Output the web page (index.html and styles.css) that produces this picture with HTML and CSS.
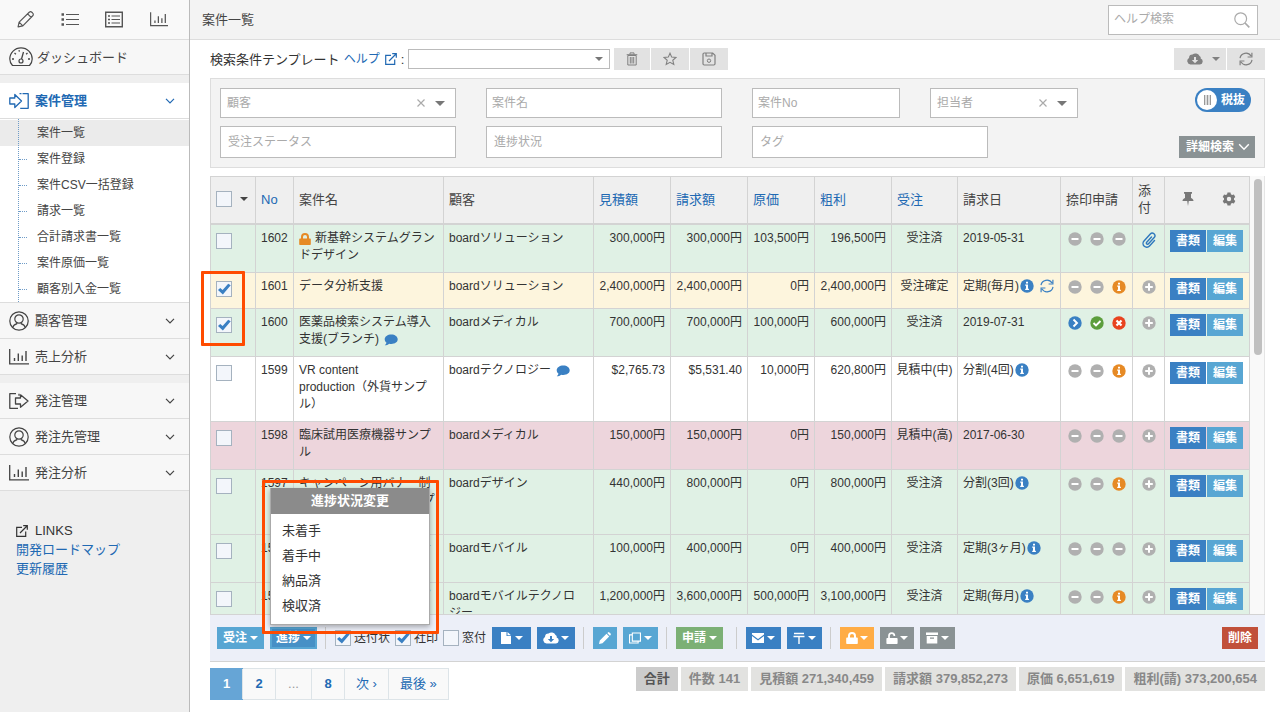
FILE: index.html
```html
<!DOCTYPE html>
<html lang="ja">
<head>
<meta charset="utf-8">
<title>案件一覧</title>
<link rel="stylesheet" href="styles.css">
</head>
<body>
<svg class="defs" aria-hidden="true">
  <symbol id="pencil-o" viewBox="0 0 16 16"><path d="M1 15l1-4.500L11.500 1.200a1.700 1.700 0 0 1 2.500 0l.8.8a1.700 1.700 0 0 1 0 2.500L5.500 14zM2 10.500L5.500 14M10 2.700L13.300 6" fill="none" stroke="currentColor" stroke-width="1.100" stroke-linejoin="round"/></symbol>
  <symbol id="list" viewBox="0 0 18 14"><path d="M5 2h13M5 7h13M5 12h13" stroke="currentColor" stroke-width="1.100"/><path d="M.5.800h2.500v2.500H.5zM.5 5.800h2.500v2.500H.5zM.5 10.800h2.500v2.500H.5z" fill="currentColor"/></symbol>
  <symbol id="listbox" viewBox="0 0 18 16"><path d="M.7.700h16.600v14.600H.7z" fill="none" stroke="currentColor" stroke-width="1.400"/><path d="M6.500 4.500h8.500M6.500 8h8.500M6.500 11.500h8.500" stroke="currentColor" stroke-width="1.200"/><path d="M3 3.700h2v1.600H3zM3 7.200h2v1.600H3zM3 10.700h2v1.600H3z" fill="currentColor"/></symbol>
  <symbol id="chart" viewBox="0 0 20 16"><path d="M.7 0v14.800H20" fill="none" stroke="currentColor" stroke-width="1.300"/><path d="M5.500 12V9M9.300 12V4.500M13.200 12V6.500M17 12V2" stroke="currentColor" stroke-width="1.400"/></symbol>
  <symbol id="gauge" viewBox="0 0 24 20"><path d="M3.500 18.500C1.700 16.500.8 14.500.8 12a11.200 11.200 0 0 1 22.400 0c0 2.500-.9 4.500-2.700 6.500z" fill="none" stroke="currentColor" stroke-width="1.200"/><circle cx="12" cy="14" r="2" fill="none" stroke="currentColor" stroke-width="1.200"/><path d="M12.500 12l2-7M3 12h2M19 12h2M5.500 6l1.400 1.200M18.500 6l-1.400 1.200M10 3.200l.4 1.500" stroke="currentColor" stroke-width="1.300"/></symbol>
  <symbol id="enter" viewBox="0 0 20 16"><path d="M.8 5h5V1.500L12.500 8l-6.700 6.500V11h-5zM10.500.7h2M13.500.7h5.700v14.600h-8" fill="none" stroke="currentColor" stroke-width="1.300" stroke-linejoin="round"/></symbol>
  <symbol id="leave" viewBox="0 0 20 16"><path d="M7 .7H.8v14.600H7M10 .7v2M7 15.300h2M6.500 5h5V1.800L19 8l-7.500 6.200V11h-5z" fill="none" stroke="currentColor" stroke-width="1.300" stroke-linejoin="round"/></symbol>
  <symbol id="user" viewBox="0 0 20 20"><circle cx="10" cy="10" r="9.200" fill="none" stroke="currentColor" stroke-width="1.200"/><circle cx="10" cy="8" r="4.200" fill="none" stroke="currentColor" stroke-width="1.200"/><path d="M3.700 16.500c.5-2.300 2-3.200 4-3.700v-1M16.300 16.500c-.5-2.300-2-3.200-4-3.700v-1" fill="none" stroke="currentColor" stroke-width="1.200"/></symbol>
  <symbol id="chev" viewBox="0 0 10 6"><path d="M1 .8l4 4 4-4" fill="none" stroke="currentColor" stroke-width="1.200"/></symbol>
  <symbol id="caret" viewBox="0 0 8 4"><path d="M0 0h8L4 4z" fill="currentColor"/></symbol>
  <symbol id="ext" viewBox="0 0 12 12"><path d="M6 2.300H.7v9h9V6.500M4 8l7-7M7.200.7h4.100v4.100" fill="none" stroke="currentColor" stroke-width="1.200"/></symbol>
  <symbol id="search" viewBox="0 0 16 16"><circle cx="6.700" cy="6.700" r="5.900" fill="none" stroke="currentColor" stroke-width="1.200"/><path d="M11 11l4.300 4.300" stroke="currentColor" stroke-width="1.700"/></symbol>
  <symbol id="trash" viewBox="0 0 12 14"><path d="M1.800 3.500h8.400v9.500H1.800zM.7 2.700h10.600M4 2.500V.9h4v1.600M4.300 5v6.500M6 5v6.500M7.700 5v6.500" fill="none" stroke="currentColor" stroke-width="1"/></symbol>
  <symbol id="star" viewBox="0 0 14 14"><path d="M7 1.200l1.700 3.900 4.300.4-3.200 2.800 1 4.200L7 10.300l-3.800 2.200 1-4.200L1 5.500l4.300-.4z" fill="none" stroke="currentColor" stroke-width="1.100"/></symbol>
  <symbol id="floppy" viewBox="0 0 14 14"><path d="M1 2.200Q1 1 2.200 1h8.500L13 3.200v8.600q0 1.200-1.200 1.200H2.200Q1 13 1 11.800zM4 1v3h6V1" fill="none" stroke="currentColor" stroke-width="1.200"/><circle cx="7" cy="8.700" r="1.700" fill="none" stroke="currentColor"/></symbol>
  <symbol id="cloud" viewBox="0 0 16 12"><path fill-rule="evenodd" d="M3.500 11.500A3.500 3.500 0 0 1 2 5a3.500 3.500 0 0 1 3.500-3.400A4.500 4.500 0 0 1 12.500 3a2 2 0 0 1 1.100 2.500A3.100 3.100 0 0 1 13 11.500zM7 4v3H4.800L8 10.300 11.200 7H9V4z" fill="currentColor"/></symbol>
  <symbol id="refresh" viewBox="0 0 14 14"><path d="M1 6.200A6 6 0 0 1 12 4M13 7.800A6 6 0 0 1 2 10M12.900.8V5H8.600M1.100 13.200V9h4.300" fill="none" stroke="currentColor" stroke-width="1.200"/></symbol>
  <symbol id="pin" viewBox="0 0 12 14"><path d="M2 0h8v1.700H9V6c1.500.5 2.500 1.500 2.500 3h-4.700L6 14l-.8-5H.5c0-1.500 1-2.500 2.500-3V1.700H2z" fill="currentColor"/></symbol>
  <symbol id="gear" viewBox="0 0 14 14"><path fill-rule="evenodd" d="M5.500.5h3l.4 1.800 1.200.7 1.800-.6 1.400 2.500-1.300 1.400v1.400l1.300 1.400-1.400 2.500-1.800-.6-1.200.7-.4 1.800h-3l-.4-1.800-1.200-.7-1.800.6L.7 9.100 2 7.700V6.300L.7 4.900l1.400-2.500 1.800.6 1.200-.7zM7 4.800a2.200 2.200 0 1 0 0 4.400 2.200 2.200 0 0 0 0-4.400z" fill="currentColor"/></symbol>
  <symbol id="lock" viewBox="0 0 12 12"><path fill-rule="evenodd" d="M1 5.500h1V4a4 4 0 0 1 8 0v1.500h1q.8 0 .8.8v4.900q0 .8-.8.800H1q-.8 0-.8-.8V6.300q0-.8.8-.8zM4 5.500h4V4a2 2 0 0 0-4 0z" fill="currentColor"/></symbol>
  <symbol id="unlock" viewBox="0 0 12 12"><path d="M3 6V3.900a2.700 2.700 0 0 1 5.400 0" fill="none" stroke="currentColor" stroke-width="1.700"/><path d="M1.200 6h9.600q.8 0 .8.8v4.400q0 .8-.8.800H1.200q-.8 0-.8-.8V6.800q0-.8.8-.8z" fill="currentColor"/></symbol>
  <symbol id="bubble" viewBox="0 0 14 12"><path d="M7.300.500C11 .5 13.700 2.600 13.700 5.300S11 10 7.300 10c-.8 0-1.500-.1-2.200-.2-1.200 1-2.700 1.500-4.300 1.500.9-.7 1.500-1.500 1.700-2.500C1.400 7.900.7 6.700.7 5.300.7 2.600 3.600.5 7.300.5z" fill="currentColor"/></symbol>
  <symbol id="minus" viewBox="0 0 14 14"><circle cx="7" cy="7" r="6.700" fill="currentColor"/><path d="M3.500 7h7" stroke="#fff" stroke-width="2"/></symbol>
  <symbol id="plus" viewBox="0 0 14 14"><circle cx="7" cy="7" r="6.700" fill="currentColor"/><path d="M3.200 7h7.600M7 3.200v7.600" stroke="#fff" stroke-width="2"/></symbol>
  <symbol id="info" viewBox="0 0 14 14"><circle cx="7" cy="7" r="6.700" fill="currentColor"/><path d="M6 2.800h2v1.700H6zM5.200 5.600H8v4.200h.9V11H5.200V9.800H6v-3h-.8z" fill="#fff"/></symbol>
  <symbol id="next" viewBox="0 0 14 14"><circle cx="7" cy="7" r="6.700" fill="currentColor"/><path d="M5.500 3.500L9 7l-3.500 3.500" fill="none" stroke="#fff" stroke-width="1.900"/></symbol>
  <symbol id="ok" viewBox="0 0 14 14"><circle cx="7" cy="7" r="6.700" fill="currentColor"/><path d="M3.500 7L6 9.500l4.500-4.500" fill="none" stroke="#fff" stroke-width="1.900"/></symbol>
  <symbol id="ng" viewBox="0 0 14 14"><circle cx="7" cy="7" r="6.700" fill="currentColor"/><path d="M4.500 4.500l5 5M9.500 4.500l-5 5" stroke="#fff" stroke-width="2.200"/></symbol>
  <symbol id="clip" viewBox="0 0 16 16"><path d="M10.500 5L5.700 10.200a1.200 1.200 0 0 0 1.800 1.600l5.700-6.300a2.600 2.600 0 0 0-3.900-3.500L3 9a3.700 3.700 0 0 0 5.500 5l5-5.500" fill="none" stroke="currentColor" stroke-width="1.400" stroke-linecap="round"/></symbol>
  <symbol id="file" viewBox="0 0 10 12"><path d="M0 0h5.500v4H10v8H0zM6.500 0L10 3.200H6.500z" fill="currentColor"/></symbol>
  <symbol id="pencil" viewBox="0 0 12 12"><path d="M0 12l.8-3.500 6.700-6.700 2.700 2.700-6.700 6.700zM8.300 1L9 .4q.7-.6 1.400 0l1.200 1.200q.6.700 0 1.400l-.7.700z" fill="currentColor"/></symbol>
  <symbol id="copy" viewBox="0 0 13 12"><path d="M3.600.600h8.800v8.800H3.600zM3.500 2.600H.6v8.800h9.300V9.500" fill="none" stroke="currentColor" stroke-width="1.200"/></symbol>
  <symbol id="mail" viewBox="0 0 12 10"><path d="M0 0h12v1.500L6 6 0 1.500zM0 3l6 4.500L12 3v7H0z" fill="currentColor"/></symbol>
  <symbol id="post" viewBox="0 0 12 12"><path d="M1 1.500h10M.5 4.500h11M6 4.500V12" fill="none" stroke="currentColor" stroke-width="1.400"/></symbol>
  <symbol id="box" viewBox="0 0 12 11"><path fill-rule="evenodd" d="M0 0h12v2.500H0zM.7 3.500h10.600V11H.7zM4 5v1.200h4V5z" fill="currentColor"/></symbol>
  <symbol id="cross" viewBox="0 0 8 8"><path d="M.5.500l7 7M7.500.5l-7 7" stroke="currentColor" stroke-width="1.200"/></symbol>
</svg>

<div class="app">
  <aside class="sidebar">
    <nav class="quick">
      <a href="#" aria-label="作成"><svg class="i17"><use href="#pencil-o"/></svg></a>
      <a href="#" aria-label="一覧"><svg class="i18"><use href="#list"/></svg></a>
      <a href="#" aria-label="詳細一覧"><svg class="i18"><use href="#listbox"/></svg></a>
      <a href="#" aria-label="分析"><svg class="i18"><use href="#chart"/></svg></a>
    </nav>
    <a class="menu dash" href="#"><svg class="i24"><use href="#gauge"/></svg>ダッシュボード</a>
    <nav class="group">
      <a class="menu open" href="#"><svg class="i20"><use href="#enter"/></svg>案件管理<svg class="chev"><use href="#chev"/></svg></a>
      <ul class="sub">
        <li class="on"><a href="#">案件一覧</a></li>
        <li><a href="#">案件登録</a></li>
        <li><a href="#">案件CSV一括登録</a></li>
        <li><a href="#">請求一覧</a></li>
        <li><a href="#">合計請求書一覧</a></li>
        <li><a href="#">案件原価一覧</a></li>
        <li><a href="#">顧客別入金一覧</a></li>
      </ul>
      <a class="menu" href="#"><svg class="i20"><use href="#user"/></svg>顧客管理<svg class="chev"><use href="#chev"/></svg></a>
      <a class="menu" href="#"><svg class="i20"><use href="#chart"/></svg>売上分析<svg class="chev"><use href="#chev"/></svg></a>
    </nav>
    <nav class="group">
      <a class="menu" href="#"><svg class="i20"><use href="#leave"/></svg>発注管理<svg class="chev"><use href="#chev"/></svg></a>
      <a class="menu" href="#"><svg class="i20"><use href="#user"/></svg>発注先管理<svg class="chev"><use href="#chev"/></svg></a>
      <a class="menu" href="#"><svg class="i20"><use href="#chart"/></svg>発注分析<svg class="chev"><use href="#chev"/></svg></a>
    </nav>
    <div class="links">
      <div class="links-title"><svg class="i12"><use href="#ext"/></svg>LINKS</div>
      <a href="#">開発ロードマップ</a>
      <a href="#">更新履歴</a>
    </div>
  </aside>

  <main class="main">
    <header class="top">
      <h1>案件一覧</h1>
      <div class="help"><input type="text" placeholder="ヘルプ検索" aria-label="ヘルプ検索"><svg class="i16"><use href="#search"/></svg></div>
    </header>

    <div class="content">
      <div class="template">
        <label for="tpl">検索条件テンプレート</label>
        <a href="#">ヘルプ <svg class="i12"><use href="#ext"/></svg></a>
        <span>:</span>
        <div class="field tpl"><select id="tpl"><option></option></select><svg class="caret"><use href="#caret"/></svg></div>
        <div class="tools">
          <button class="tool first" aria-label="削除"><svg class="i14"><use href="#trash"/></svg></button>
          <button class="tool" aria-label="お気に入り"><svg class="i14"><use href="#star"/></svg></button>
          <button class="tool" aria-label="保存"><svg class="i14"><use href="#floppy"/></svg></button>
        </div>
        <div class="tools right">
          <button class="tool wide" aria-label="ダウンロード"><svg class="i16"><use href="#cloud"/></svg><svg class="caret"><use href="#caret"/></svg></button>
          <button class="tool" aria-label="更新"><svg class="i14"><use href="#refresh"/></svg></button>
        </div>
      </div>

      <form class="filter">
        <div class="fields">
          <div class="frow">
            <div class="field combo long"><select aria-label="顧客"><option>顧客</option></select><svg class="x"><use href="#cross"/></svg><svg class="caret big"><use href="#caret"/></svg></div>
            <input class="field long" type="text" placeholder="案件名" aria-label="案件名">
            <input class="field short" type="text" placeholder="案件No" aria-label="案件No">
            <div class="field combo short"><select aria-label="担当者"><option>担当者</option></select><svg class="x"><use href="#cross"/></svg><svg class="caret big"><use href="#caret"/></svg></div>
          </div>
          <div class="frow tall">
            <input class="field long" type="text" placeholder="受注ステータス" aria-label="受注ステータス">
            <input class="field long" type="text" placeholder="進捗状況" aria-label="進捗状況">
            <input class="field long" type="text" placeholder="タグ" aria-label="タグ">
          </div>
        </div>
        <div class="fside">
          <button type="button" class="toggle"><span class="knob"></span>税抜</button>
          <button type="button" class="detail">詳細検索<svg class="i12"><use href="#chev"/></svg></button>
        </div>
      </form>

      <section class="list">
        <div class="scroll">
          <table>
            <colgroup><col class="c-chk"><col class="c-no"><col><col><col class="c-amt"><col class="c-amt"><col class="c-cost"><col class="c-amt"><col class="c-st"><col class="c-date"><col class="c-app"><col class="c-att"><col class="c-act"></colgroup>
            <thead><tr>
              <th><div class="hchk"><input type="checkbox" aria-label="すべて選択"><svg class="caret"><use href="#caret"/></svg></div></th>
              <th><a href="#">No</a></th><th>案件名</th><th>顧客</th><th><a href="#">見積額</a></th><th><a href="#">請求額</a></th><th><a href="#">原価</a></th><th><a href="#">粗利</a></th><th><a href="#">受注</a></th><th>請求日</th><th>捺印申請</th><th>添付</th>
              <th><div class="hact"><svg class="i14"><use href="#pin"/></svg><svg class="i14"><use href="#gear"/></svg></div></th>
            </tr></thead>
            <tbody>
              <tr class="green"><td class="chk"><input type="checkbox" aria-label="1602"></td><td class="no">1602</td><td><svg class="i12 orange mr"><use href="#lock"/></svg>新基幹システムグランドデザイン</td><td>boardソリューション</td><td class="n">300,000円</td><td class="n">300,000円</td><td class="n">103,500円</td><td class="n">196,500円</td><td class="c">受注済</td><td>2019-05-31</td><td class="ics"><svg><use href="#minus"/></svg><svg><use href="#minus"/></svg><svg><use href="#minus"/></svg></td><td class="att"><svg class="clip"><use href="#clip"/></svg></td><td class="act"><button class="btn blue">書類</button><button class="btn sky">編集</button></td></tr>
              <tr class="yellow"><td class="chk"><input type="checkbox" checked aria-label="1601"></td><td class="no">1601</td><td>データ分析支援</td><td>boardソリューション</td><td class="n">2,400,000円</td><td class="n">2,400,000円</td><td class="n">0円</td><td class="n">2,400,000円</td><td class="c">受注確定</td><td class="date">定期(毎月)<svg class="i14 cblue ml"><use href="#info"/></svg><svg class="i14 cblue rep"><use href="#refresh"/></svg></td><td class="ics"><svg><use href="#minus"/></svg><svg><use href="#minus"/></svg><svg class="orange"><use href="#info"/></svg></td><td class="att"><svg><use href="#plus"/></svg></td><td class="act"><button class="btn blue">書類</button><button class="btn sky">編集</button></td></tr>
              <tr class="green"><td class="chk"><input type="checkbox" checked aria-label="1600"></td><td class="no">1600</td><td>医薬品検索システム導入支援(ブランチ)<svg class="bubble"><use href="#bubble"/></svg></td><td>boardメディカル</td><td class="n">700,000円</td><td class="n">700,000円</td><td class="n">100,000円</td><td class="n">600,000円</td><td class="c">受注済</td><td>2019-07-31</td><td class="ics"><svg class="cblue"><use href="#next"/></svg><svg class="cgreen"><use href="#ok"/></svg><svg class="cred"><use href="#ng"/></svg></td><td class="att"><svg><use href="#plus"/></svg></td><td class="act"><button class="btn blue">書類</button><button class="btn sky">編集</button></td></tr>
              <tr><td class="chk"><input type="checkbox" aria-label="1599"></td><td class="no">1599</td><td>VR content<br>production（外貨サンプル）</td><td class="date">boardテクノロジー<svg class="bubble"><use href="#bubble"/></svg></td><td class="n">$2,765.73</td><td class="n">$5,531.40</td><td class="n">10,000円</td><td class="n">620,800円</td><td class="c">見積中(中)</td><td class="date">分割(4回)<svg class="i14 cblue ml"><use href="#info"/></svg></td><td class="ics"><svg><use href="#minus"/></svg><svg><use href="#minus"/></svg><svg class="orange"><use href="#info"/></svg></td><td class="att"><svg><use href="#plus"/></svg></td><td class="act"><button class="btn blue">書類</button><button class="btn sky">編集</button></td></tr>
              <tr class="pink"><td class="chk"><input type="checkbox" aria-label="1598"></td><td class="no">1598</td><td>臨床試用医療機器サンプル</td><td>boardメディカル</td><td class="n">150,000円</td><td class="n">150,000円</td><td class="n">0円</td><td class="n">150,000円</td><td class="c">見積中(高)</td><td>2017-06-30</td><td class="ics"><svg><use href="#minus"/></svg><svg><use href="#minus"/></svg><svg><use href="#minus"/></svg></td><td class="att"><svg><use href="#plus"/></svg></td><td class="act"><button class="btn blue">書類</button><button class="btn sky">編集</button></td></tr>
              <tr class="green"><td class="chk"><input type="checkbox" aria-label="1597"></td><td class="no">1597</td><td>キャンペーン用バナー制作と運用支援業務(サンプル)</td><td>boardデザイン</td><td class="n">440,000円</td><td class="n">800,000円</td><td class="n">0円</td><td class="n">800,000円</td><td class="c">受注済</td><td class="date">分割(3回)<svg class="i14 cblue ml"><use href="#info"/></svg></td><td class="ics"><svg><use href="#minus"/></svg><svg><use href="#minus"/></svg><svg class="orange"><use href="#info"/></svg></td><td class="att"><svg><use href="#plus"/></svg></td><td class="act"><button class="btn blue">書類</button><button class="btn sky">編集</button></td></tr>
              <tr class="green"><td class="chk"><input type="checkbox" aria-label="1596"></td><td class="no">1596</td><td>モバイルアプリ開発のサンプル</td><td>boardモバイル</td><td class="n">100,000円</td><td class="n">400,000円</td><td class="n">0円</td><td class="n">400,000円</td><td class="c">受注済</td><td class="date">定期(3ヶ月)<svg class="i14 cblue ml"><use href="#info"/></svg></td><td class="ics"><svg><use href="#minus"/></svg><svg><use href="#minus"/></svg><svg><use href="#minus"/></svg></td><td class="att"><svg><use href="#plus"/></svg></td><td class="act"><button class="btn blue">書類</button><button class="btn sky">編集</button></td></tr>
              <tr class="green"><td class="chk"><input type="checkbox" aria-label="1595"></td><td class="no">1595</td><td>クラウドシステムサンプル</td><td>boardモバイルテクノロジー</td><td class="n">1,200,000円</td><td class="n">3,600,000円</td><td class="n">500,000円</td><td class="n">3,100,000円</td><td class="c">受注済</td><td class="date">定期(毎月)<svg class="i14 cblue ml"><use href="#info"/></svg></td><td class="ics"><svg><use href="#minus"/></svg><svg><use href="#minus"/></svg><svg class="orange"><use href="#info"/></svg></td><td class="att"><svg><use href="#plus"/></svg></td><td class="act"><button class="btn blue">書類</button><button class="btn sky">編集</button></td></tr>
            </tbody>
          </table>
        </div>
        <div class="track"><div class="thumb"></div></div>
        <div class="mark mark-rows"></div>
      </section>

      <div class="actions">
        <button class="btn sky">受注<svg class="caret"><use href="#caret"/></svg></button>
        <div class="drop">
          <button class="btn active">進捗<svg class="caret"><use href="#caret"/></svg></button>
          <div class="popup">
            <h2>進捗状況変更</h2>
            <ul><li><a href="#">未着手</a></li><li><a href="#">着手中</a></li><li><a href="#">納品済</a></li><li><a href="#">検収済</a></li></ul>
          </div>
          <div class="mark mark-menu"></div>
        </div>
        <span class="sep"></span>
        <div class="checks">
          <label><input type="checkbox" checked>送付状</label>
          <label><input type="checkbox" checked>社印</label>
          <label><input type="checkbox">窓付</label>
        </div>
        <button class="btn blue roomy" aria-label="書類"><svg class="i12"><use href="#file"/></svg><svg class="caret"><use href="#caret"/></svg></button>
        <button class="btn blue" aria-label="ダウンロード"><svg class="i16"><use href="#cloud"/></svg><svg class="caret near"><use href="#caret"/></svg></button>
        <span class="sep"></span>
        <button class="btn sky" aria-label="編集"><svg class="i12"><use href="#pencil"/></svg></button>
        <button class="btn sky" aria-label="複製"><svg class="i12"><use href="#copy"/></svg><svg class="caret"><use href="#caret"/></svg></button>
        <span class="sep"></span>
        <button class="btn leaf">申請<svg class="caret"><use href="#caret"/></svg></button>
        <span class="sep gap"></span>
        <button class="btn blue" aria-label="メール"><svg class="i12"><use href="#mail"/></svg><svg class="caret"><use href="#caret"/></svg></button>
        <button class="btn blue" aria-label="郵送"><svg class="i12"><use href="#post"/></svg><svg class="caret"><use href="#caret"/></svg></button>
        <span class="sep"></span>
        <button class="btn amber" aria-label="ロック"><svg class="i12"><use href="#lock"/></svg><svg class="caret near"><use href="#caret"/></svg></button>
        <button class="btn gray" aria-label="ロック解除"><svg class="i12"><use href="#unlock"/></svg><svg class="caret near"><use href="#caret"/></svg></button>
        <button class="btn gray" aria-label="アーカイブ"><svg class="i12"><use href="#box"/></svg><svg class="caret"><use href="#caret"/></svg></button>
        <button class="btn red">削除</button>
      </div>

      <footer class="foot">
        <nav class="pages"><a class="on" href="#">1</a><a href="#">2</a><span>...</span><a href="#">8</a><a class="word" href="#">次 ›</a><a class="word" href="#">最後 »</a></nav>
        <div class="sums"><span class="total">合計</span><span>件数 141</span><span>見積額 271,340,459</span><span>請求額 379,852,273</span><span>原価 6,651,619</span><span>粗利(請) 373,200,654</span></div>
      </footer>
    </div>
  </main>
</div>
</body>
</html>
```

FILE: styles.css
```css
* { box-sizing: border-box; }
body { margin: 0; font: 12px/17px "Liberation Sans", "Noto Sans CJK JP", sans-serif; color: #333; background: #fff; }
a { color: #2169b3; text-decoration: none; }
button, input, select { font: inherit; color: inherit; margin: 0; border-radius: 0; }
h1, h2, ul { margin: 0; padding: 0; font-weight: normal; list-style: none; }
svg { flex: none; }
.defs { display: none; }
.i12 { width: 12px; height: 12px; }
.i14 { width: 14px; height: 14px; }
.i16 { width: 16px; height: 16px; }
.i17 { width: 17px; height: 17px; }
.i18 { width: 18px; height: 17px; }
.i20 { width: 20px; height: 20px; }
.i24 { width: 24px; height: 20px; }
.caret { width: 8px; height: 4px; }

.app { display: flex; height: 100vh; min-width: 1200px; }

/* sidebar */
.sidebar { width: 190px; flex: none; background: #efefef; border-right: 1px solid #bbb; }
.quick { display: flex; height: 40px; background: #f9f9f9; border-bottom: 1px solid #ddd; align-items: center; padding: 0 21px 0 17px; justify-content: space-between; }
.quick a { display: flex; color: #555; }
.menu { display: flex; align-items: center; height: 36px; padding: 0 14px 0 9px; gap: 6px; font-size: 13px; color: #444; background: #f7f7f7; border-bottom: 1px solid #ddd; }
.menu .chev { width: 10px; height: 6px; margin-left: auto; }
.menu.dash { height: 35px; gap: 4px; }
.menu.open { background: #fff; color: #2169b3; font-weight: bold; }
.group { margin-top: 8px; }
.sub { position: relative; background: #fff; border-bottom: 1px solid #ddd; padding: 1px 0 0; }
.sub::before { content: ""; position: absolute; z-index: 1; left: 18px; top: 0; bottom: 0; border-left: 1px dotted #6f9cc8; }
.sub li { position: relative; height: 26px; padding-left: 37px; line-height: 26px; }
.sub li:not(.on)::before { content: ""; position: absolute; left: 19px; width: 8px; top: 13px; border-top: 1px dotted #6f9cc8; }
.sub a { color: #444; }
.sub .on { background: #ebebeb; }
.links { padding: 30px 16px; font-size: 13px; line-height: 19px; }
.links a, .links-title { display: block; }
.links-title { display: flex; align-items: center; gap: 7px; }

/* header */
.main { flex: 1; min-width: 0; display: flex; flex-direction: column; }
.top { height: 40px; flex: none; display: flex; justify-content: space-between; align-items: center; padding: 0 22px 0 12px; background: #f3f3f3; border-bottom: 1px solid #ddd; }
h1 { font-size: 13px; color: #444; }
.help { display: flex; align-items: center; width: 150px; height: 30px; padding: 0 7px 0 5px; border: 1px solid #bbb; background: #fff; color: #aaa; }
.help input { flex: 1; min-width: 0; border: 0; padding: 0; outline: 0; }
::placeholder { color: #aaa; opacity: 1; }
.content { flex: 1; min-height: 0; display: flex; flex-direction: column; padding: 8px 15px 12px 20px; }

/* template row */
.template { display: flex; align-items: center; height: 22px; font-size: 13px; gap: 4px; }
.template > a { display: flex; align-items: center; gap: 5px; font-size: 12px; }
.field { border: 1px solid #bbb; background: #fff; position: relative; display: flex; align-items: center; }
.field select { appearance: none; border: 0; background: none; width: 100%; height: 100%; padding: 0 6px; color: #aaa; outline: 0; }
.field .caret { position: absolute; right: 6px; color: #777; }
.tpl { width: 202px; height: 20px; }
.tools { display: flex; gap: 1px; }
.tools.right { margin-left: auto; }
.tool { display: flex; align-items: center; justify-content: center; gap: 9px; width: 38px; height: 22px; padding: 0; border: 0; background: #e2e2e2; color: #808080; }
.tool.first { width: 36px; }
.tool.wide { width: 52px; padding-left: 6px; }

/* filter */
.filter { display: flex; justify-content: space-between; margin-top: 8px; padding: 9px; height: 90px; flex: none; background: #f3f3f3; border: 1px solid #ddd; }
.fields { display: flex; flex-direction: column; gap: 8px; }
.frow { display: flex; gap: 30px; height: 30px; }
.frow.tall { height: 32px; }
.long { width: 236px; }
.short { width: 148px; }
input.field { padding: 0 5px; outline: 0; }
.tall input.field { padding: 0 7px; }
.field .x { position: absolute; right: 30px; width: 8px; height: 8px; color: #aaa; }
.field .caret.big { right: 10px; width: 10px; height: 5px; }
.fside { display: flex; flex-direction: column; justify-content: space-between; align-items: flex-end; }
.toggle { display: flex; align-items: center; gap: 4px; width: 56px; height: 24px; margin-right: 4px; padding: 0 0 0 2px; border: 0; border-radius: 12px; background: #3a80c3; color: #fff; font-weight: bold; }
.knob { width: 20px; height: 20px; border-radius: 10px; background: repeating-linear-gradient(90deg, #999 0 1px, #ddd 1px 3px) center / 7px 10px no-repeat #fff; }
.detail { display: flex; align-items: center; gap: 4px; height: 22px; padding: 0 5px 0 7px; border: 0; background: #8a9294; color: #fff; font-weight: bold; }

/* table */
.list { position: relative; flex: 1 1 0; min-height: 0; display: flex; margin-top: 8px; }
.scroll { flex: 1; min-width: 0; overflow: hidden; }
table { width: 100%; table-layout: fixed; border-collapse: separate; border-spacing: 0; border-left: 1px solid #d3d3d3; border-top: 1px solid #d3d3d3; }
.c-chk { width: 45px; } .c-no { width: 38px; } .c-amt { width: 77px; } .c-cost { width: 67px; } .c-st { width: 66px; }
.c-date { width: 103px; } .c-app { width: 72px; } .c-att { width: 32px; } .c-act { width: 85px; }
th, td { border-right: 1px solid #d3d3d3; border-bottom: 1px solid #d3d3d3; text-align: left; }
th { height: 48px; padding: 0 5px 2px; border-bottom-width: 2px; background: #efefef; font-size: 13px; font-weight: normal; color: #444; vertical-align: middle; }
td { padding: 5px 7px 8px 5px; vertical-align: top; }
.green td { background: #e0f1e5; }
.yellow td { background: #fdf5dd; }
.pink td { background: #edd5dc; }
.no, .n, .c, .date { white-space: nowrap; }
td.n { text-align: right; padding-left: 0; padding-right: 5px; }
td.c { text-align: center; padding-left: 0; padding-right: 0; }
td svg { vertical-align: -3px; }
td.chk { padding-top: 8px; padding-bottom: 4px; }
td.ics { padding: 7px 0 0 7px; line-height: 0; color: #b0b0b0; white-space: nowrap; }
.ics svg, .att svg { width: 14px; height: 14px; }
.ics svg + svg { margin-left: 8px; }
td.att { padding: 7px 0 0; text-align: center; line-height: 0; color: #b0b0b0; }
.att svg.clip { width: 16px; height: 16px; color: #2f78bd; }
td.act { padding: 5px 0 8px 5px; line-height: 0; white-space: nowrap; }
.act .btn { display: inline-flex; vertical-align: top; }
.act .btn + .btn { margin-left: 1px; }
.mr { margin-right: 4px; }
.ml { margin-left: 1px; }
.rep { margin-left: 6px; }
.bubble { width: 14px; height: 12px; margin-left: 5px; color: #3a80c3; }
.orange, .ics .orange { color: #e68a25; }
.cblue { color: #3a80c3; }
.cgreen { color: #5c9e3c; }
.cred { color: #e8431f; }
.hchk, .hact { display: flex; align-items: center; }
.hchk { gap: 8px; }
.hact { justify-content: space-between; padding: 0 8px 0 11px; color: #777; }
input[type="checkbox"] { appearance: none; display: block; flex: none; width: 16px; height: 16px; border: 1px solid #a5b2bf; background: #f3f6fb; }
input[type="checkbox"]:checked::before { content: ""; display: block; width: 14px; height: 14px; background: #3a80c3; clip-path: polygon(7% 58%, 23% 42%, 40% 58%, 80% 12%, 98% 24%, 42% 90%); }
.track { width: 15px; flex: none; padding: 3px 2px 0 3px; background: #f9f9f9; border-right: 1px solid #e5e5e5; }
.thumb { width: 8px; height: 176px; margin: 0 auto; border-radius: 4px; background: #c0c0c0; }
.mark { position: absolute; border: 3px solid #ff4b00; border-radius: 1px; pointer-events: none; }
.mark-rows { left: -9px; top: 95px; width: 44px; height: 75px; }

/* bulk actions */
.actions { display: flex; align-items: center; gap: 6px; height: 48px; flex: none; padding: 0 7px; background: #eceff8; border-top: 1px solid #d3d3d3; border-bottom: 1px solid #d3d3d3; }
.btn { display: flex; align-items: center; justify-content: center; gap: 3px; height: 22px; padding: 0 6px; border: 0; color: #fff; font-weight: bold; line-height: 22px; }
.btn .near { margin-left: -1px; }
.btn.roomy { padding: 0 8px; }
.blue { background: #3a80c3; } .sky { background: #58a6d3; } .leaf { background: #7cb075; } .amber { background: #ffac45; }
.gray { background: #8a9294; } .red { background: #c1503a; margin-left: auto; }
.active { background: #4790c6; outline: 2px solid #58a6d3; outline-offset: -2px; }
.sep { width: 1px; height: 22px; margin: 0 3px 0 2px; background: #ccc; }
.sep.gap { margin-left: 7px; }
.checks { display: flex; gap: 5px; }
.checks label { display: flex; align-items: center; gap: 3px; }
.drop { position: relative; }
.popup { position: absolute; left: 0; bottom: calc(100% + 2px); z-index: 2; width: 160px; background: #fff; border: 1px solid #aaa; border-top: 0; box-shadow: 0 2px 5px rgba(0, 0, 0, .3); font-size: 13px; }
.popup h2 { height: 26px; line-height: 26px; text-align: center; font-size: 13px; font-weight: bold; color: #fff; background: #8b8b8b; }
.popup ul { padding: 4px 11px 6px; }
.popup li { line-height: 25px; }
.popup a { color: #333; }
.mark-menu { z-index: 3; left: -8px; bottom: 15px; width: 177px; height: 154px; }

/* footer */
.foot { display: flex; justify-content: space-between; align-items: flex-start; height: 38px; flex: none; padding-top: 5px; }
.pages { display: flex; margin-top: 1px; border: 1px solid #dde4e8; font-size: 13px; font-weight: bold; }
.pages > * { min-width: 33px; height: 30px; line-height: 30px; text-align: center; background: #f9f9f9; border-left: 1px solid #dde4e8; }
.pages > .on { background: #66a5d6; color: #fff; border: 0; outline: 1px solid #66a5d6; min-width: 31px; }
.pages span { color: #999; font-weight: normal; min-width: 36px; }
.pages .word { padding: 0 11px; font-weight: normal; }
.sums { display: flex; gap: 3px; font-size: 13px; font-weight: bold; color: #888; }
.sums span { height: 24px; padding: 0 8px; line-height: 24px; background: #e2e2e0; }
.sums .total { background: #ccc; color: #555; }
```
